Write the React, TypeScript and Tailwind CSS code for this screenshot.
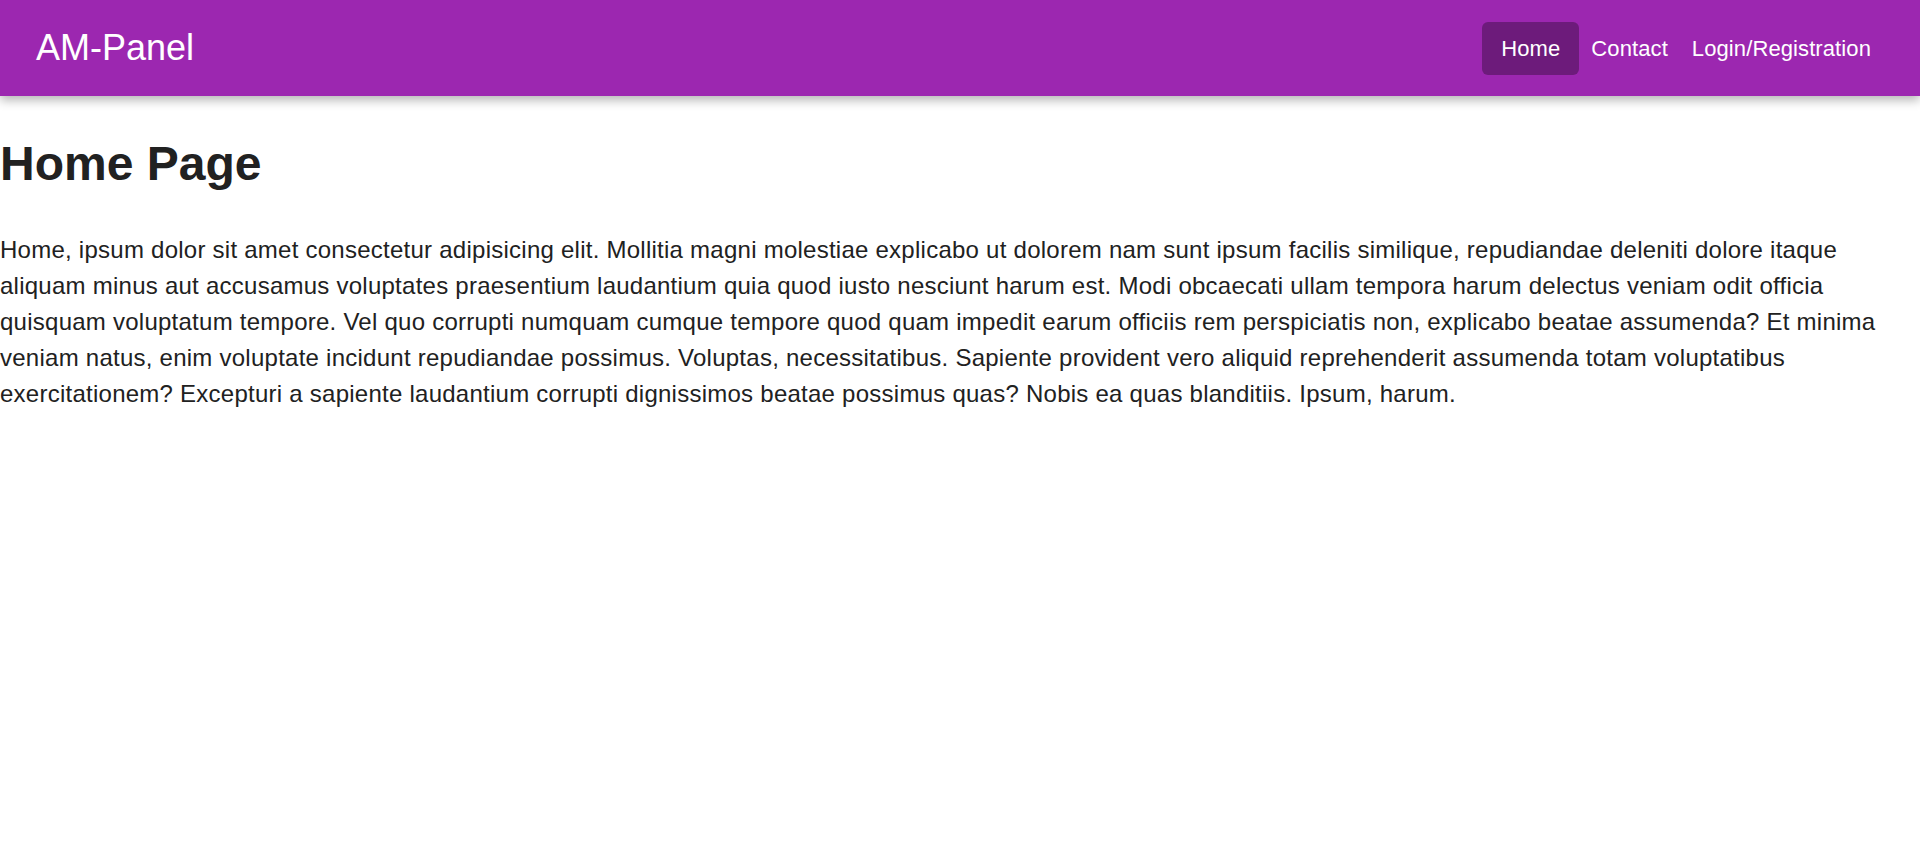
import React from 'react';

const links = [
  { label: 'Home', active: true },
  { label: 'Contact', active: false },
  { label: 'Login/Registration', active: false },
];

const App: React.FC = () => {
  return (
    <div className="min-h-screen bg-white font-['Liberation_Sans',Arial,sans-serif] text-[#212121]">
      {/* Navbar */}
      <header className="relative z-10 h-24 flex items-center justify-between bg-[#9c27b0] pl-9 pr-[37px] shadow-[0_4px_10px_rgba(0,0,0,0.3)]">
        <a href="#" className="text-[36px] text-white leading-none">AM-Panel</a>
        <nav className="flex items-center tracking-[0.1px]">
          {links.map(({ label, active }) => (
            <a
              key={label}
              href="#"
              className={
                active
                  ? 'h-[53px] flex items-center px-[19px] rounded-md bg-black/30 text-[22px] text-white'
                  : 'h-[53px] flex items-center px-3 text-[22px] text-white'
              }
            >
              {label}
            </a>
          ))}
        </nav>
      </header>

      {/* Content */}
      <main>
        <h1 className="mt-8 mb-8 text-[48px] font-bold leading-[1.5]">Home Page</h1>
        <p className="text-[24px] leading-[1.5] tracking-[0.25px]">
          Home, ipsum dolor sit amet consectetur adipisicing elit. Mollitia magni molestiae explicabo ut dolorem nam
          sunt ipsum facilis similique, repudiandae deleniti dolore itaque aliquam minus aut accusamus voluptates
          praesentium laudantium quia quod iusto nesciunt harum est. Modi obcaecati ullam tempora harum delectus veniam
          odit officia quisquam voluptatum tempore. Vel quo corrupti numquam cumque tempore quod quam impedit earum
          officiis rem perspiciatis non, explicabo beatae assumenda? Et minima veniam natus, enim voluptate incidunt
          repudiandae possimus. Voluptas, necessitatibus. Sapiente provident vero aliquid reprehenderit assumenda totam
          voluptatibus exercitationem? Excepturi a sapiente laudantium corrupti dignissimos beatae possimus quas? Nobis
          ea quas blanditiis. Ipsum, harum.
        </p>
      </main>
    </div>
  );
};

export default App;
